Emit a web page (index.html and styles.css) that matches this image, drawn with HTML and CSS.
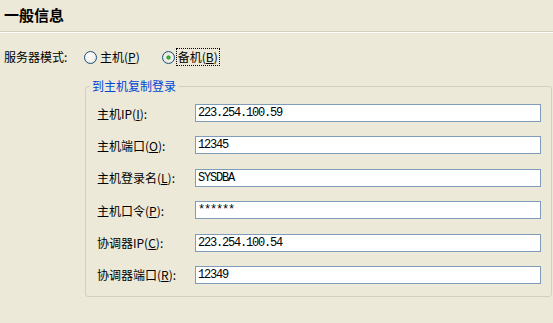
FILE: index.html
```html
<!DOCTYPE html>
<html lang="zh-CN">
<head>
    <meta charset="UTF-8">
    <title>一般信息</title>
    <link rel="stylesheet" href="styles.css">
</head>
<body>
    <div class="header">
        <h1>一般信息</h1>
    </div>
    <div class="mode-row">
        <span class="mode-label">服务器模式:</span>
        <label class="radio-option">
            <span class="radio"></span>
            <span class="radio-text">主机(<u>P</u>)</span>
        </label>
        <label class="radio-option">
            <span class="radio checked"></span>
            <span class="radio-text focused">备机(<u>B</u>)</span>
        </label>
    </div>
    <fieldset class="group">
        <legend>到主机复制登录</legend>
        <div class="form-row">
            <label class="form-label">主机IP(<u>I</u>):</label>
            <input class="text-input" type="text" value="223.254.100.59">
        </div>
        <div class="form-row">
            <label class="form-label">主机端口(<u>O</u>):</label>
            <input class="text-input" type="text" value="12345">
        </div>
        <div class="form-row">
            <label class="form-label">主机登录名(<u>L</u>):</label>
            <input class="text-input" type="text" value="SYSDBA">
        </div>
        <div class="form-row">
            <label class="form-label">主机口令(<u>P</u>):</label>
            <input class="text-input" type="text" value="******">
        </div>
        <div class="form-row">
            <label class="form-label">协调器IP(<u>C</u>):</label>
            <input class="text-input" type="text" value="223.254.100.54">
        </div>
        <div class="form-row">
            <label class="form-label">协调器端口(<u>R</u>):</label>
            <input class="text-input" type="text" value="12349">
        </div>
    </fieldset>
</body>
</html>
```

FILE: styles.css
```css
* {
    box-sizing: border-box;
}
html, body {
    margin: 0;
    padding: 0;
    height: 100%;
}
body {
    background-color: #ece9d8;
    font-family: "Noto Sans CJK SC", sans-serif;
    font-size: 12px;
    color: #000000;
}
.header {
    height: 32px;
    padding: 5px 4px 0;
    border-bottom: 1px solid #d3d0bf;
    box-shadow: 0 1px 0 #ffffff;
}
h1 {
    margin: 0;
    font-size: 15px;
    line-height: 20px;
    font-weight: 700;
}
.mode-row {
    display: flex;
    align-items: center;
    height: 16px;
    margin-top: 17px;
    padding-left: 4px;
    line-height: 16px;
}
.mode-label {
    width: 80px;
}
.radio-option {
    display: flex;
    align-items: center;
    margin-right: 20px;
}
.radio {
    width: 13px;
    height: 13px;
    border: 1px solid #1c5180;
    border-radius: 50%;
    background: radial-gradient(circle at 40% 40%, #ffffff 0%, #f4f3ee 50%, #d8d6cb 100%);
    margin-right: 1px;
}
.radio.checked {
    background: radial-gradient(circle at 50% 50%, #3fbf3f 0%, #21a121 22%, #f4f3ee 32%, #e6e4da 70%, #d8d6cb 100%);
}
.radio-text {
    padding: 0 1px;
    border: 1px dotted transparent;
}
.radio-text.focused {
    border-color: #000000;
}
.group {
    margin: 14px 1px 0 85px;
    padding: 11px 10px 12px 11px;
    border: 1px solid #d0d0bf;
    border-radius: 3px;
    min-width: 0;
}
.group legend {
    margin-left: -7px;
    padding: 0 2px;
    font-size: 12px;
    line-height: 14px;
    color: #0046d5;
}
.form-row {
    display: flex;
    align-items: center;
    height: 18px;
}
.form-row + .form-row {
    margin-top: 14.4px;
}
.form-label {
    width: 98px;
    flex-shrink: 0;
}
.text-input {
    flex: 1;
    height: 18px;
    border: 1px solid #7f9db9;
    background-color: #ffffff;
    padding: 0 2px;
    font-family: "Liberation Mono", monospace;
    font-size: 12px;
    letter-spacing: -1.2px;
    color: #000000;
    outline: none;
}
```
